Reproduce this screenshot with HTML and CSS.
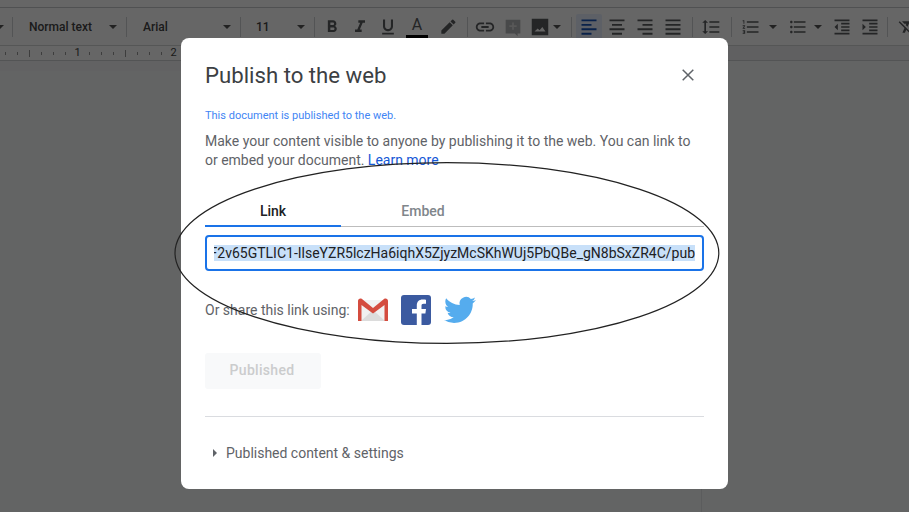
FILE: index.html
```html
<!DOCTYPE html>
<html lang="en">
<head>
<meta charset="utf-8">
<title>Publish to the web</title>
<link rel="stylesheet" href="styles.css">
</head>
<body>
<div class="app">
  <div class="topgap"></div>
  <div class="toolbar">
    <svg class="caret first" viewBox="0 0 8 4"><path d="M0 0h8L4 4z"/></svg>
    <i class="sep"></i>
    <div class="select"><span>Normal text</span><svg class="caret" viewBox="0 0 8 4"><path d="M0 0h8L4 4z"/></svg></div>
    <i class="sep"></i>
    <div class="select"><span>Arial</span><svg class="caret" viewBox="0 0 8 4"><path d="M0 0h8L4 4z"/></svg></div>
    <i class="sep"></i>
    <div class="select small"><span>11</span><svg class="caret" viewBox="0 0 8 4"><path d="M0 0h8L4 4z"/></svg></div>
    <i class="sep"></i>
    <div class="btn gap3"><svg viewBox="0 0 24 24"><path d="M15.6 10.79c.97-.67 1.65-1.77 1.65-2.79 0-2.26-1.75-4-4-4H7v14h7.04c2.09 0 3.71-1.7 3.71-3.79 0-1.52-.86-2.82-2.15-3.42zM10 6.5h3c.83 0 1.5.67 1.5 1.5s-.67 1.5-1.5 1.5h-3v-3zm3.5 9H10v-3h3.5c.83 0 1.5.67 1.5 1.5s-.67 1.5-1.5 1.5z"/></svg></div>
    <div class="btn"><svg viewBox="0 0 24 24"><path d="M10 4v3h2.21l-3.42 8H6v3h8v-3h-2.21l3.42-8H18V4z"/></svg></div>
    <div class="btn"><svg viewBox="0 0 24 24"><path d="M12 17c3.31 0 6-2.69 6-6V3h-2.5v8c0 1.93-1.57 3.5-3.5 3.5S8.500 12.930 8.500 11V3H6v8c0 3.310 2.690 6 6 6zm-7 2v2h14v-2H5z"/></svg></div>
    <div class="btn textcolor gap1"><span class="a">A</span><i class="colorbar"></i></div>
    <div class="btn gap3"><svg viewBox="0 0 24 24"><path d="M17.750 7 14 3.250l-10 10V17h3.750l10-10zm2.960-2.960a.996.996 0 0 0 0-1.410L18.370.29a.996.996 0 0 0-1.410 0L15 2.250 18.750 6l1.960-1.960z" transform="translate(0 3)"/></svg></div>
    <i class="sep gapsep5"></i>
    <div class="btn gap3"><svg class="big" viewBox="0 0 24 24"><path d="M3.900 12c0-1.710 1.390-3.100 3.100-3.100h4V7H7c-2.760 0-5 2.240-5 5s2.240 5 5 5h4v-1.900H7c-1.710 0-3.100-1.390-3.100-3.100zM8 13h8v-2H8v2zm9-6h-4v1.900h4c1.710 0 3.100 1.390 3.100 3.100s-1.390 3.100-3.100 3.100h-4V17h4c2.760 0 5-2.240 5-5s-2.240-5-5-5z"/></svg></div>
    <div class="btn dim"><svg class="big" viewBox="0 0 24 24"><path d="M4 4h16v15h-3v3l-3-3H4z"/><path class="plus" d="M11 7h2v3h3v2h-3v3h-2v-3H8v-2h3z"/></svg></div>
    <div class="btn wide"><svg class="big" viewBox="0 0 24 24"><path d="M3 3h18v18H3zM6 17h12l-3.500-5-3 3.500-2-2z" fill-rule="evenodd"/></svg><svg class="caret" viewBox="0 0 8 4"><path d="M0 0h8L4 4z"/></svg></div>
    <i class="sep gapsep4"></i>
    <div class="btn active"><svg viewBox="0 0 24 24"><path d="M3 3h18v2.200H3zm0 5.300h12v2.200H3zm0 5.300h18v2.200H3zM3 19h12v2.200H3z"/></svg></div>
    <div class="btn"><svg viewBox="0 0 24 24"><path d="M3 3h18v2.200H3zm3 5.300h12v2.200H6zm-3 5.300h18v2.200H3zM6 19h12v2.200H6z"/></svg></div>
    <div class="btn"><svg viewBox="0 0 24 24"><path d="M3 3h18v2.200H3zm6 5.300h12v2.200H9zm-6 5.300h18v2.200H3zM9 19h12v2.200H9z"/></svg></div>
    <div class="btn"><svg viewBox="0 0 24 24"><path d="M3 3h18v2.200H3zm0 5.300h18v2.200H3zm0 5.300h18v2.200H3zM3 19h18v2.200H3z"/></svg></div>
    <i class="sep gapsep5"></i>
    <div class="btn gap4"><svg viewBox="0 0 24 24"><path d="M6 7h2.500L5 3.500 1.500 7H4v10H1.500L5 20.500 8.500 17H6V7zm4-2v2h12V5H10zm0 14h12v-2H10v2zm0-6h12v-2H10v2z"/></svg></div>
    <i class="sep gapsep6"></i>
    <div class="btn gap5"><svg viewBox="0 0 24 24"><path d="M2 17h2v.500H3v1h1v.500H2v1h3v-4H2v1zm1-9h1V4H2v1h1v3zm-1 3h1.800L2 13.100v.900h3v-1H3.200L5 10.900V10H2v1zm5-6v2h14V5H7zm0 14h14v-2H7v2zm0-6h14v-2H7v2z"/></svg></div>
    <div class="cslot"><svg class="caret" viewBox="0 0 8 4"><path d="M0 0h8L4 4z"/></svg></div>
    <div class="btn gap3"><svg viewBox="0 0 24 24"><path d="M4 10.500c-.830 0-1.500.670-1.500 1.500s.670 1.500 1.500 1.500 1.500-.670 1.500-1.500-.670-1.500-1.500-1.500zm0-6c-.830 0-1.500.670-1.500 1.500S3.170 7.500 4 7.500 5.500 6.830 5.500 6 4.830 4.500 4 4.500zm0 12c-.830 0-1.500.680-1.500 1.500s.680 1.500 1.500 1.500 1.500-.680 1.500-1.500-.670-1.500-1.500-1.500zM7 19h14v-2H7v2zm0-6h14v-2H7v2zm0-8v2h14V5H7z"/></svg></div>
    <div class="cslot tight"><svg class="caret" viewBox="0 0 8 4"><path d="M0 0h8L4 4z"/></svg></div>
    <div class="btn gap2"><svg viewBox="0 0 24 24"><path d="M11 17h10v-2H11v2zm-8-5 4 4V8l-4 4zm0 9h18v-2H3v2zM3 3v2h18V3H3zm8 6h10V7H11v2zm0 4h10v-2H11v2z"/></svg></div>
    <div class="btn"><svg viewBox="0 0 24 24"><path d="M3 21h18v-2H3v2zM3 8v8l4-4-4-4zm8 9h10v-2H11v2zM3 3v2h18V3H3zm8 6h10V7H11v2zm0 4h10v-2H11v2z"/></svg></div>
    <i class="sep gapsep3"></i>
    <div class="btn gap5"><svg viewBox="0 0 24 24"><path d="M3.270 5 2 6.270l6.970 6.970L6.500 19h3l1.570-3.660L16.730 21 18 19.730 3.550 5.270 3.270 5zM6 5v.180L8.820 8h2.400l-.720 1.680 2.100 2.100L14.210 8H20V5H6z"/></svg></div>
  </div>
  <div class="rulerbar">
    <div class="ruler">
      <span class="tick"></span><span class="tick"></span><span class="tick tall"></span><span class="tick"></span><span class="tick"></span><span class="tick"></span><b class="num">1</b><span class="tick"></span><span class="tick"></span><span class="tick"></span><span class="tick tall"></span><span class="tick"></span><span class="tick"></span><span class="tick"></span><b class="num">2</b>
    </div>
  </div>
  <div class="canvas"><div class="page"></div></div>
</div>

<div class="overlay"></div>

<section class="dialog">
  <header class="head">
    <h1 class="title">Publish to the web</h1>
    <svg class="close" viewBox="0 0 12 12"><path d="M.700.700l10.600 10.600M11.300.700.700 11.300"/></svg>
  </header>
  <p class="status">This document is published to the web.</p>
  <p class="desc">Make your content visible to anyone by publishing it to the web. You can link to or embed your document. <a class="learn">Learn more</a></p>
  <div class="tabs">
    <div class="tab on">Link</div>
    <div class="tab">Embed</div>
  </div>
  <div class="linkbox"><div class="clip"><span class="sel">F2v65GTLIC1-IlseYZR5lczHa6iqhX5ZjyzMcSKhWUj5PbQBe_gN8bSxZR4C/pub</span></div></div>
  <div class="share">
    <span>Or share this link using:</span>
    <svg class="gm" viewBox="0 0 30 24"><path fill="#f1f1f1" d="M1 2h28v21H1z"/><path fill="#dcdcdc" d="M3 23 15 12l12 11z"/><path fill="#d44c3f" d="M0 3c0-2 2-3 4-2l11 9L26 1c2-1 4 0 4 2v20h-3.500V7L15 15.500 3.500 7v16H0z"/></svg>
    <svg class="fb" viewBox="0 0 30 30"><rect width="30" height="30" rx="3" fill="#3b5aa0"/><path fill="#fff" d="M20.500 30V18.400h3.900l.6-4.500h-4.500V11c0-1.300.4-2.200 2.200-2.200H25v-4c-.4-.1-1.800-.2-3.400-.2-3.400 0-5.800 2.100-5.800 5.900v3.400H11v4.500h4.800V30z"/></svg>
    <svg class="tw" viewBox="0 0 24 24"><path fill="#55acee" d="M23.950 4.570a10 10 0 0 1-2.820.770 4.960 4.960 0 0 0 2.160-2.720c-.950.550-2 .950-3.130 1.180a4.920 4.920 0 0 0-8.380 4.480C7.690 8.090 4.070 6.130 1.640 3.160a4.820 4.820 0 0 0-.660 2.470c0 1.710.870 3.210 2.190 4.100a4.900 4.900 0 0 1-2.230-.620v.060a4.920 4.920 0 0 0 3.950 4.830 5 5 0 0 1-2.210.080 4.940 4.940 0 0 0 4.600 3.420A9.870 9.870 0 0 1 0 19.540a13.940 13.940 0 0 0 7.550 2.210c9.050 0 14-7.500 14-13.980 0-.210 0-.420-.020-.630a9.940 9.940 0 0 0 2.460-2.550z"/></svg>
  </div>
  <button class="publish" disabled>Published</button>
  <hr class="rule">
  <div class="settings"><svg class="tri" viewBox="0 0 4 8"><path d="M0 0l4 4-4 4z"/></svg><span>Published content &amp; settings</span></div>
</section>

<svg class="ellipse" viewBox="0 0 548 186"><ellipse cx="272.900" cy="92" rx="271.900" ry="90.400"/></svg>
</body>
</html>
```
FILE: styles.css
```css
* { box-sizing: border-box; }
html, body { margin: 0; height: 100%; overflow: hidden; }
body { font-family: Roboto, "Liberation Sans", sans-serif; background: #fff; width: 909px; height: 512px; position: relative; }
.app { display: flex; flex-direction: column; height: 512px; }
.topgap { height: 8px; border-bottom: 1px solid #c8cacc; }
.toolbar { height: 38px; display: flex; align-items: center; flex: none; white-space: nowrap; overflow: hidden; border-bottom: 1px solid #d4d6d8; color: #444; }
.sep { display: block; width: 1px; height: 20px; background: #d0d2d4; flex: none; }
.caret { width: 8px; height: 4px; fill: #555; flex: none; }
.caret.first { margin-left: -4px; margin-right: 8px; }
.select { width: 113px; padding: 0 9px 0 16px; display: flex; justify-content: space-between; align-items: center; font-size: 12px; font-weight: 500; color: #444; flex: none; }
.select.small { width: 73px; padding-left: 15px; }
.select span { line-height: 16px; }
.btn { width: 28px; height: 28px; display: flex; align-items: center; justify-content: center; flex: none; border-radius: 2px; }
.btn svg:not(.caret) { width: 20px; height: 20px; fill: #5a5c5f; }
.btn svg.big { width: 22px; height: 22px; }
.btn.wide { width: 40px; justify-content: flex-start; padding-left: 2px; gap: 2px; }
.btn.dim svg:not(.caret) { fill: #b4b6b8; }
.btn.dim svg .plus { fill: #dcdcdc; }
.btn.active { background: #e8f0fe; width: 26px; height: 26px; margin: 0 1px 0 4px; }
.btn.active svg:not(.caret) { fill: #1a56b8; }
.gap1 { margin-left: 1px; }
.gap2 { margin-left: 2px; }
.gap3 { margin-left: 3px; }
.gap4 { margin-left: 4px; }
.gap5 { margin-left: 5px; }
.gapsep3 { margin-left: 3px; }
.gapsep4 { margin-left: 4px; }
.gapsep5 { margin-left: 5px; }
.gapsep6 { margin-left: 6px; }
.cslot { width: 16px; display: flex; justify-content: flex-start; padding-left: 4px; flex: none; }
.cslot.tight { margin-left: -2px; }
.textcolor { flex-direction: column; position: relative; padding-top: 2px; }
.textcolor .a { font-size: 16px; line-height: 17px; font-weight: 400; color: #5a5c5f; }
.colorbar { display: block; width: 22px; height: 4px; background: #000; margin-top: 2px; }
.rulerbar { height: 15px; flex: none; background: #f0f1f2; border-bottom: 1px solid #d0d2d4; }
.ruler { width: 182px; height: 14px; background: #fff; display: flex; align-items: center; padding-left: 5px; gap: 11px; overflow: hidden; }
.tick { display: block; width: 1px; height: 3px; background: #999; flex: none; }
.tick.tall { height: 7px; }
.num { width: 1px; display: flex; justify-content: center; flex: none; font-size: 11px; font-weight: 400; color: #444; line-height: 14px; }
.canvas { flex: 1; background: #f8f9fa; display: flex; }
.page { width: 702px; background: linear-gradient(#f5f6f7 0 10px, #f8f9fa 10px); border-right: 1px solid #e4e6e8; }
.overlay { position: absolute; inset: 0; background: rgba(0,0,0,.6); }
.dialog { position: absolute; left: 181px; top: 38px; width: 547px; height: 451px; background: #fff; border-radius: 8px; padding: 0 24px; display: flex; flex-direction: column; }
.head { display: flex; justify-content: space-between; align-items: center; height: 37px; margin-top: 19px; }
.title { margin: 0; font-family: Roboto, sans-serif; font-size: 22.200px; font-weight: 400; color: #3c4043; line-height: 37px; }
.close { width: 12px; height: 12px; stroke: #5f6368; stroke-width: 1.500; fill: none; margin: 0 10px 2px 0; }
.status { margin: 15px 0 0; font-size: 11px; line-height: 14px; color: #4285f4; }
.desc { margin: 9px 0 0; font-size: 14px; line-height: 19px; color: #5f6368; width: 490px; letter-spacing: -.01px; }
.learn { color: #1558d6; }
.tabs { display: flex; margin-top: 31px; width: 499px; border-bottom: 1px solid #bdbdbd; height: 26px; }
.tab { width: 136px; font-size: 14px; font-weight: 500; text-align: center; line-height: 20px; color: #80868b; }
.tab.on { color: #202124; border-bottom: 2px solid #1a73e8; height: 26px; }
.tab + .tab { width: 150px; padding-left: 14px; }
.linkbox { margin-top: 8px; width: 499px; height: 36px; border: 2px solid #1a73e8; border-radius: 4px; display: flex; align-items: center; padding: 0 7px; font-size: 14px; color: #202124; white-space: nowrap; }
.clip { width: 482px; overflow: hidden; display: flex; justify-content: flex-end; }
.sel { background: #c8e0f9; line-height: 16px; flex: none; }
.share { display: flex; align-items: center; margin-top: 23px; height: 32px; font-size: 14px; color: #5f6368; }
.gm { width: 30px; height: 24px; margin-left: 8px; }
.fb { width: 30px; height: 30px; margin-left: 13px; }
.tw { width: 32px; height: 32px; margin-left: 13px; }
.publish { margin-top: 27px; width: 116px; height: 36px; border: 0; border-radius: 3px; padding: 0 2px 2px 0; background: #f8f9fa; color: #cbcccd; font: 500 14px Roboto, sans-serif; letter-spacing: .3px; }
.rule { margin: 27px 0 0; width: 499px; border: 0; border-top: 1px solid #dadce0; }
.settings { display: flex; align-items: center; margin-top: 27px; padding-left: 8px; font-size: 14px; line-height: 18px; color: #5f6368; gap: 9px; letter-spacing: -.01px; }
.tri { width: 4px; height: 8px; fill: #5f6368; }
.ellipse { position: absolute; left: 174px; top: 161px; width: 548px; height: 186px; fill: none; stroke: #222; stroke-width: 1.200; }
```
